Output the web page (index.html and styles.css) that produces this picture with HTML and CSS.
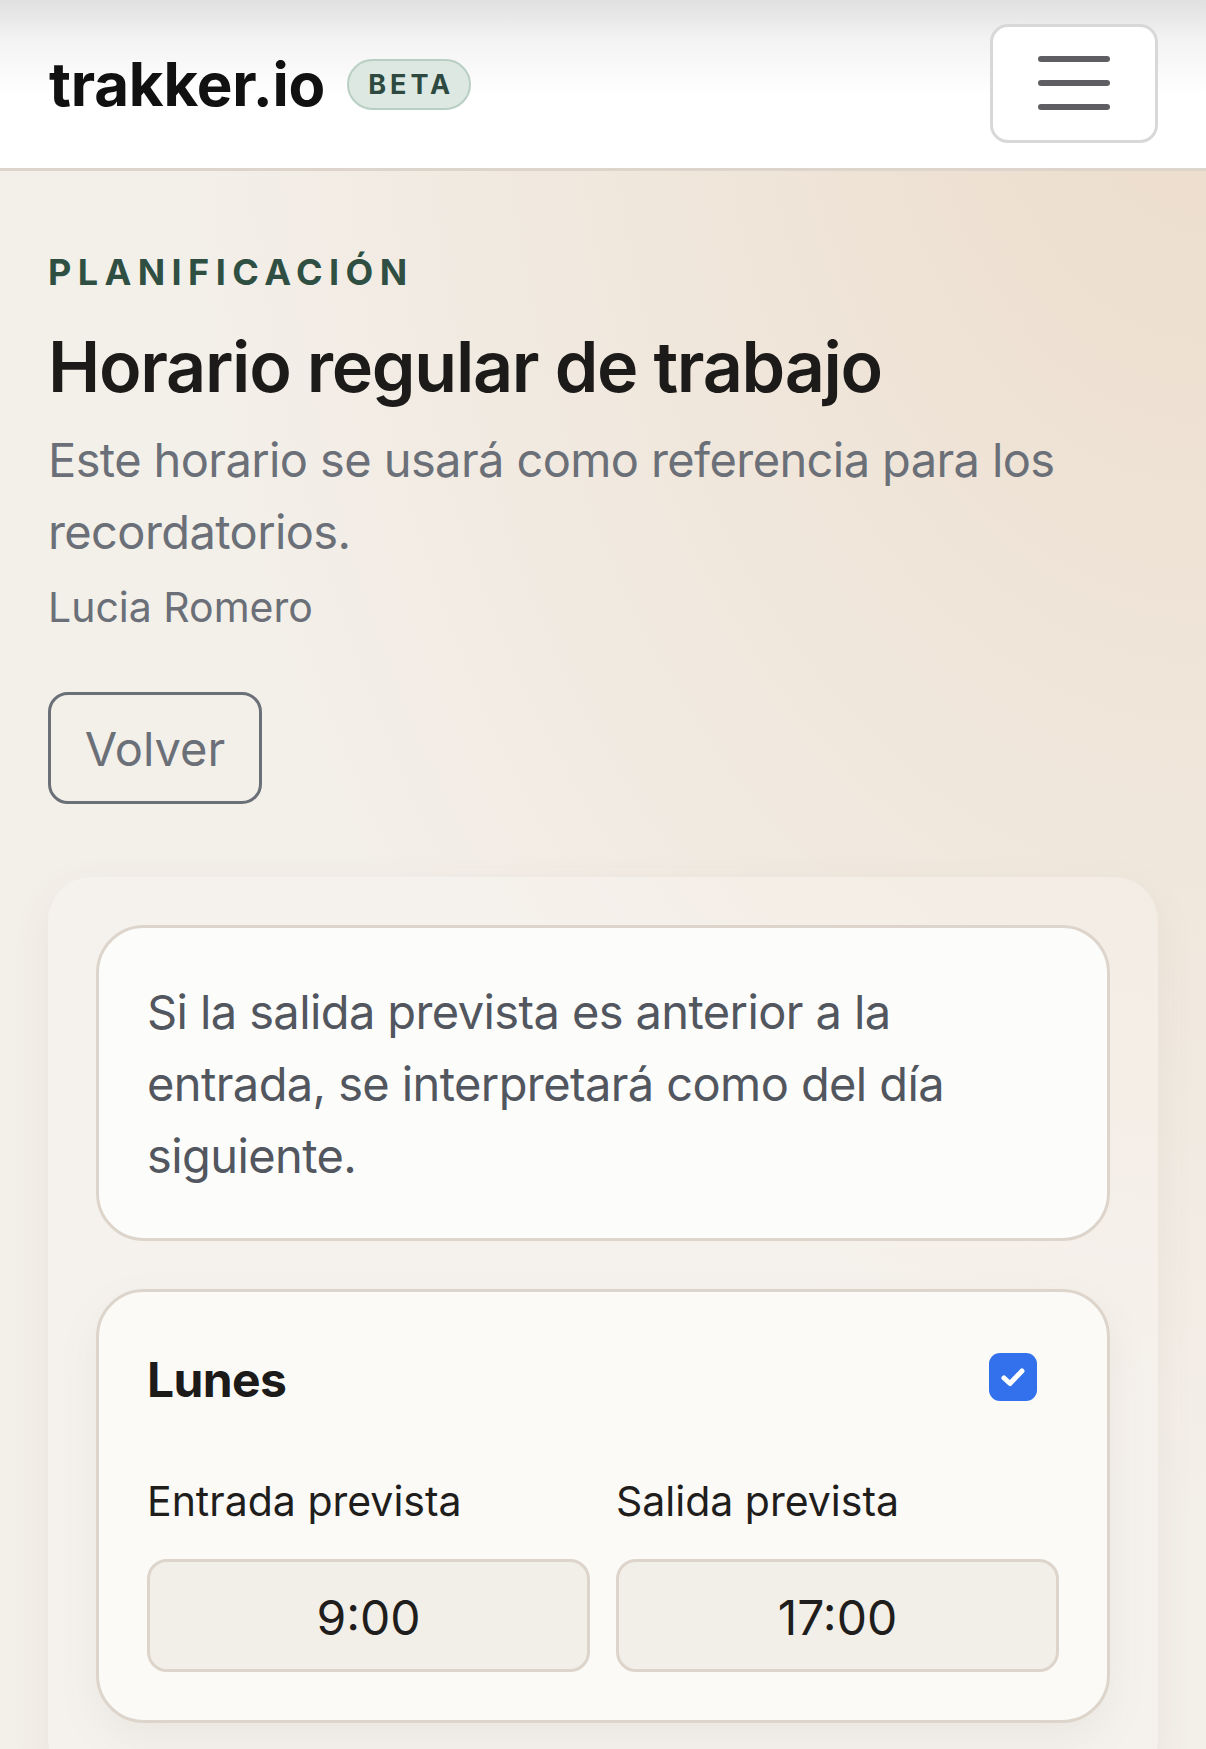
FILE: index.html
```html
<!DOCTYPE html>
<html>
<head>
    <link rel="stylesheet" href="styles.css">
</head>
<body>
  <header class="topbar">
    <div class="brand">
      <span class="brand-name">trakker.io</span>
      <span class="beta">BETA</span>
    </div>
    <button class="menu-button" type="button">
      <span></span>
      <span></span>
      <span></span>
    </button>
  </header>

  <main class="page">
    <div class="eyebrow">PLANIFICACIÓN</div>
    <h1 class="title">Horario regular de trabajo</h1>
    <p class="subtitle">Este horario se usará como referencia para los recordatorios.</p>
    <p class="person">Lucia Romero</p>
    <button class="back-button" type="button">Volver</button>

    <section class="panel">
      <div class="notice">
        Si la salida prevista es anterior a la entrada, se interpretará como del día siguiente.
      </div>

      <div class="day-card">
        <div class="day-head">
          <span class="day-name">Lunes</span>
          <span class="check">
            <svg width="26" height="22" viewBox="0 0 26 22">
              <path d="M4 12 L10 17.5 L22 5" fill="none" stroke="#fff" stroke-width="5" stroke-linecap="round" stroke-linejoin="round"/>
            </svg>
          </span>
        </div>
        <div class="day-fields">
          <div class="field">
            <label>Entrada prevista</label>
            <div class="time-box">9:00</div>
          </div>
          <div class="field">
            <label>Salida prevista</label>
            <div class="time-box">17:00</div>
          </div>
        </div>
      </div>
    </section>
  </main>
</body>
</html>
```

FILE: styles.css
```css
/* base */
* {
    box-sizing: border-box;
}

body {
    margin: 0;
    font-family: Inter, "Noto Sans", sans-serif;
    background: radial-gradient(ellipse at 100% 0%, #ecdccb 0%, rgba(236, 220, 203, 0) 60%), #f3efe9;
    min-height: 1749px;
    color: #1c1b19;
}

/* top bar */
.topbar {
    height: 171px;
    display: flex;
    align-items: center;
    justify-content: space-between;
    padding: 0 48px 0 49px;
    background: linear-gradient(#e0e0e0 0px, #f3f3f3 40px, #fff 95px);
    border-bottom: 3px solid #ddd5cb;
}

.brand {
    display: flex;
    align-items: center;
    gap: 22px;
}

.brand-name {
    font-size: 60px;
    font-weight: 700;
    letter-spacing: -0.2px;
    color: #111;
}

.beta {
    display: inline-block;
    height: 51px;
    line-height: 47px;
    padding: 0 15px 0 19px;
    border: 2px solid #b9cfc3;
    border-radius: 26px;
    background: #dce8e1;
    color: #2e4a40;
    font-size: 27px;
    font-weight: 700;
    letter-spacing: 4px;
}

.menu-button {
    width: 168px;
    height: 119px;
    margin-top: -2px;
    border: 3px solid #d8d8d8;
    border-radius: 18px;
    background: #fff;
    display: flex;
    flex-direction: column;
    align-items: center;
    justify-content: center;
    gap: 18px;
    padding: 0;
}

.menu-button span {
    display: block;
    width: 72px;
    height: 6px;
    border-radius: 3px;
    background: #5f5f63;
}

/* page content */
.page {
    padding: 79px 48px 0 48px;
}

.eyebrow {
    font-size: 36px;
    font-weight: 700;
    letter-spacing: 6.4px;
    color: #2f4f43;
}

.title {
    margin: 30px 0 0 0;
    font-size: 70px;
    line-height: 86px;
    font-weight: 600;
    letter-spacing: -1.3px;
    color: #1c1b19;
}

.subtitle {
    margin: 14px 0 0 0;
    font-size: 47px;
    line-height: 72px;
    letter-spacing: -0.6px;
    color: #6b7078;
}

.person {
    margin: 8px 0 0 0;
    font-size: 41px;
    line-height: 63px;
    color: #6b7078;
}

.back-button {
    margin-top: 53px;
    width: 214px;
    height: 112px;
    border: 3px solid #6b7078;
    border-radius: 20px;
    background: transparent;
    font-family: Inter, sans-serif;
    font-size: 47px;
    color: #6b7078;
    padding: 0;
}

/* panel with the days */
.panel {
    margin-top: 73px;
    padding: 48px 48px 60px 48px;
    border-radius: 44px;
    background: rgba(255, 255, 255, 0.22);
    box-shadow: 0 12px 40px rgba(120, 100, 80, 0.07);
}

.notice {
    padding: 48px 48px 46px 48px;
    border: 3px solid #ddd5cb;
    border-radius: 48px;
    background: #fcfcfb;
    font-size: 47px;
    line-height: 72px;
    letter-spacing: -0.6px;
    color: #52565e;
}

.day-card {
    margin-top: 48px;
    padding: 50px 48px 48px 48px;
    border: 3px solid #ddd5cb;
    border-radius: 48px;
    background: #fbfaf7;
    box-shadow: 0 16px 40px rgba(120, 100, 80, 0.08);
}

.day-head {
    display: flex;
    align-items: center;
    justify-content: space-between;
    height: 70px;
}

.day-name {
    font-size: 48px;
    font-weight: 700;
    letter-spacing: -0.6px;
    color: #1c1b19;
    margin-top: 4px;
}

.check {
    width: 48px;
    height: 48px;
    margin-right: 22px;
    border-radius: 11px;
    background: #3370eb;
    display: flex;
    align-items: center;
    justify-content: center;
}

.day-fields {
    margin-top: 58px;
    display: grid;
    grid-template-columns: 1fr 1fr;
    column-gap: 26px;
}

.field label {
    display: block;
    font-size: 41px;
    line-height: 63px;
    color: #1f1e1c;
}

.time-box {
    margin-top: 26px;
    height: 113px;
    border: 3px solid #ddd5cb;
    border-radius: 20px;
    background: #f2eee8;
    display: flex;
    align-items: center;
    justify-content: center;
    padding-top: 4px;
    font-size: 48px;
    color: #1f1e1c;
}
```
